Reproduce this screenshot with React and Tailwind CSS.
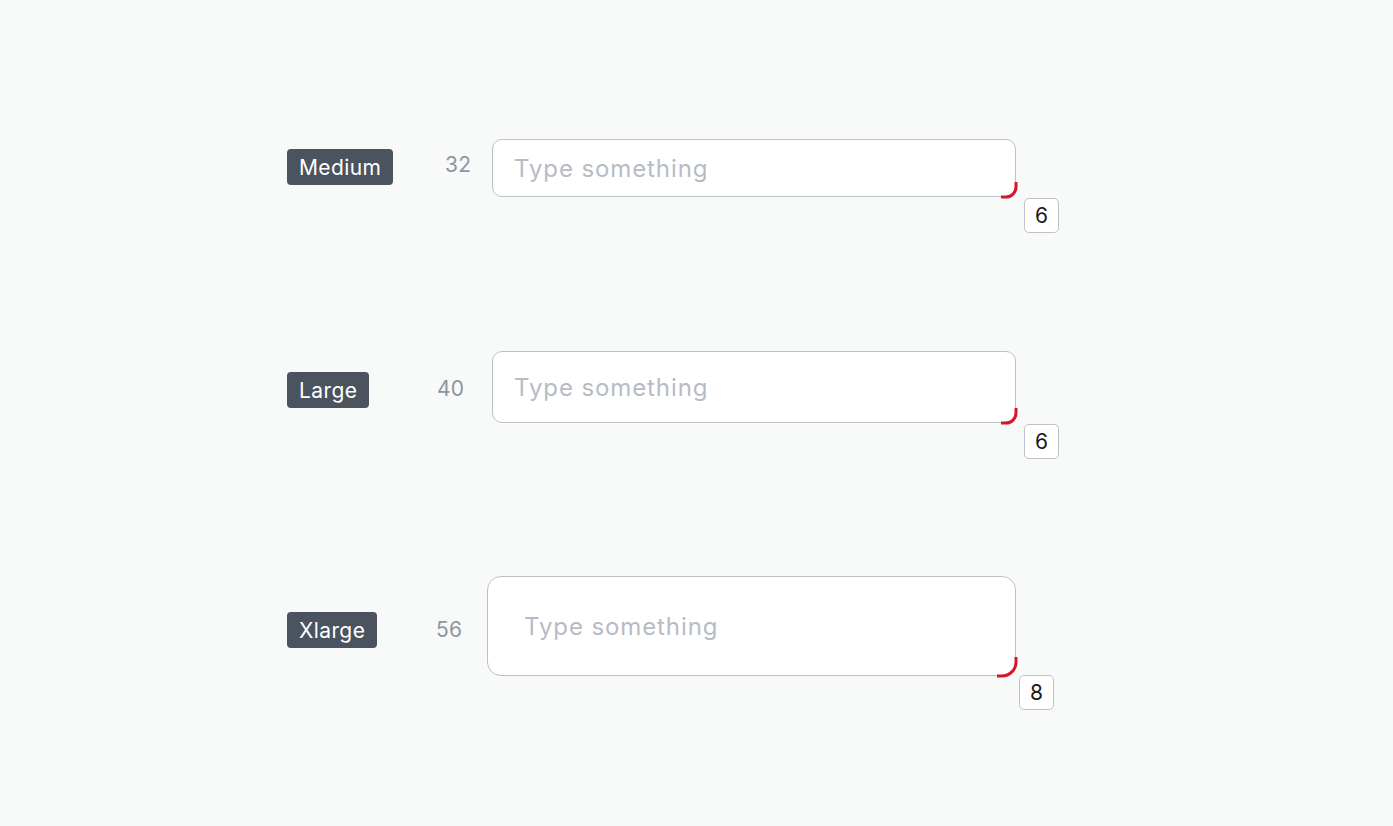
function Corner({ big }) {
  const r = big ? 14 : 10;
  const s = r + 7;
  return (
    <svg
      width={s}
      height={s}
      viewBox={`0 0 ${s} ${s}`}
      className="absolute -right-[2.5px] -bottom-[2.5px]"
      fill="none"
    >
      <path
        d={`M${s - 2} 0 V${s - 2 - r} A${r} ${r} 0 0 1 ${s - 2 - r} ${s - 2} H0`}
        stroke="#d4172b"
        strokeWidth="3"
      />
    </svg>
  );
}

function Tag({ children, className = '' }) {
  return (
    <span className={`inline-flex h-[36px] items-center rounded-[4px] bg-[#4b535e] px-[12px] text-[21px] leading-none tracking-[0.4px] text-white ${className}`}>
      {children}
    </span>
  );
}

function RadiusChip({ value, className = '' }) {
  return (
    <span className={`absolute flex h-[35px] w-[35px] items-center justify-center rounded-[5px] border-[1.5px] border-[#bec2ca] bg-white text-[21px] leading-none text-[#1a1a1a] ${className}`}>
      {value}
    </span>
  );
}

function Field({ h, w, rounded, pad, big, chip, chipPos }) {
  return (
    <div className={`relative ${h} ${w} ${rounded} border-[1.5px] border-[#bcc0c8] bg-white`}>
      <div className={`flex h-full items-center ${pad} pt-[1px] text-[24px] tracking-[0.9px] text-[#b7bbc6]`}>Type something</div>
      <Corner big={big} />
      <RadiusChip value={chip} className={chipPos} />
    </div>
  );
}

export default function App() {
  return (
    <div className="min-h-[826px] w-full bg-[#f8f9f9] pl-[287px] pt-[139px] font-['Inter','Liberation_Sans',sans-serif]">
      {/* Medium / 32 */}
      <div className="flex items-center">
        <div className="w-[158px]">
          <Tag className="-mt-[2px]">Medium</Tag>
        </div>
        <div className="-mt-[6px] w-[47px] text-[21px] tracking-[0.3px] text-[#8e95a2]">32</div>
        <Field h="h-[58px]" w="w-[524px]" rounded="rounded-[10px]" pad="pl-[21px]" chip="6" chipPos="left-[531px] top-[58px]" />
      </div>

      {/* Large / 40 */}
      <div className="mt-[154px] flex items-center">
        <div className="w-[150px]">
          <Tag className="mt-[6px]">Large</Tag>
        </div>
        <div className="mt-[4px] w-[55px] text-[21px] tracking-[0.3px] text-[#8e95a2]">40</div>
        <Field h="h-[72px]" w="w-[524px]" rounded="rounded-[10px]" pad="pl-[21px]" chip="6" chipPos="left-[531px] top-[72px]" />
      </div>

      {/* Xlarge / 56 */}
      <div className="mt-[153px] flex items-center">
        <div className="w-[149px]">
          <Tag className="mt-[8px]">Xlarge</Tag>
        </div>
        <div className="mt-[8px] w-[51px] text-[21px] tracking-[0.3px] text-[#8e95a2]">56</div>
        <Field h="h-[100px]" w="w-[529px]" rounded="rounded-[14px]" pad="pl-[36px]" big chip="8" chipPos="left-[531px] top-[98px]" />
      </div>
    </div>
  );
}
